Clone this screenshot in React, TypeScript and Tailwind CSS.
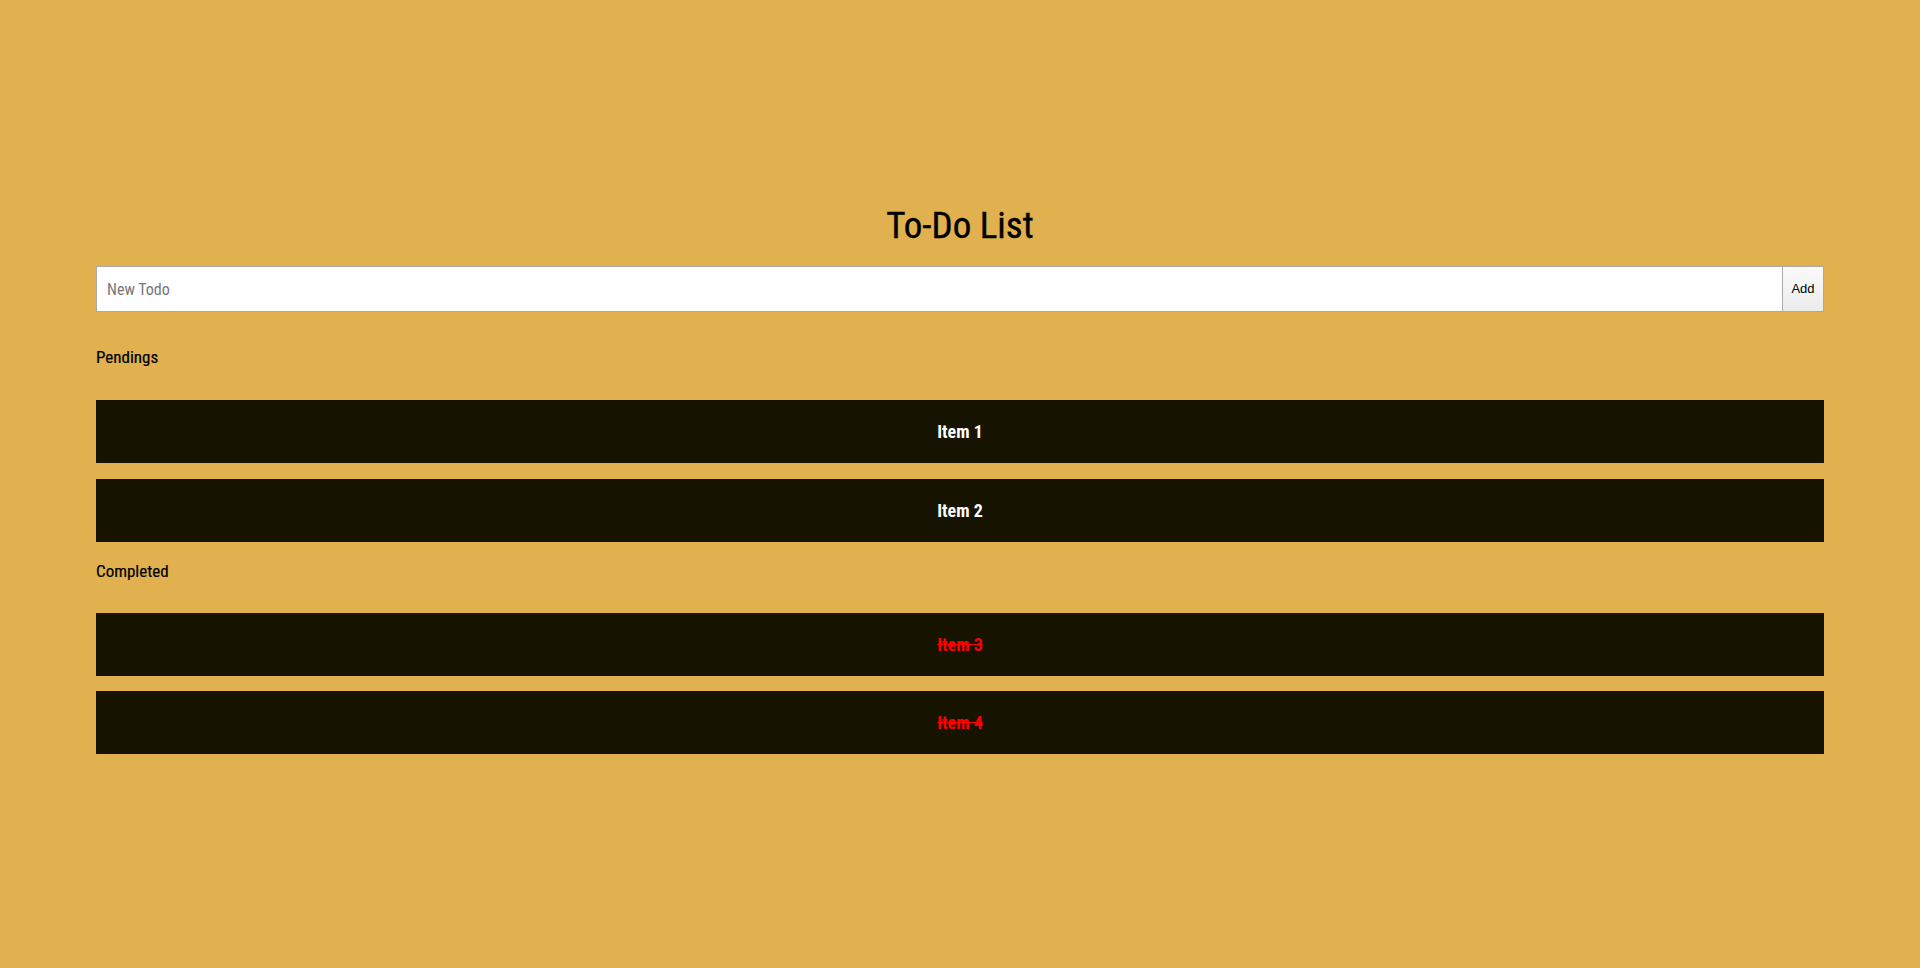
const PENDING = ["Item 1", "Item 2"];
const DONE = ["Item 3", "Item 4"];

function TodoRow({ label, done }: { label: string; done?: boolean }) {
  return (
    <li className="flex h-[63px] items-center justify-center bg-[#161400]">
      <span
        className={
          done
            ? "text-[18px] font-bold leading-none text-[#ff0000] line-through"
            : "text-[18px] font-bold leading-none text-white"
        }
      >
        {label}
      </span>
    </li>
  );
}

export default function App() {
  return (
    <div className="min-h-[968px] w-full bg-[#e1b04f] font-['Liberation_Sans_Narrow','Roboto_Condensed',Roboto,sans-serif] text-black">
      <div className="mx-auto w-[90%] pt-[207px]">
        <h1 className="text-center text-[37px] font-normal leading-none [-webkit-text-stroke:0.4px_black]">To-Do List</h1>

        {/* input row */}
        <form className="mt-[22px] flex h-[46px]" onSubmit={(e) => e.preventDefault()}>
          <input
            type="text"
            placeholder="New Todo"
            className="h-full flex-1 border border-[#a9a9a9] bg-white px-[10px] text-[16px] outline-none placeholder:text-[#777]"
          />
          <button
            type="submit"
            className="h-full w-[41px] border border-l-0 border-[#a9a9a9] bg-gradient-to-b from-[#fafafa] to-[#ececec] text-[13px] font-['Liberation_Sans',sans-serif] text-black"
          >
            Add
          </button>
        </form>

        <h3 className="mt-[37px] text-[17px] font-normal leading-none [-webkit-text-stroke:0.2px_black]">Pendings</h3>
        <ul className="mt-[34px] flex flex-col gap-[16px]">
          {PENDING.map((t) => (
            <TodoRow key={t} label={t} />
          ))}
        </ul>

        <h3 className="mt-[21px] text-[17px] font-normal leading-none [-webkit-text-stroke:0.2px_black]">Completed</h3>
        <ul className="mt-[33px] flex flex-col gap-[15px]">
          {DONE.map((t) => (
            <TodoRow key={t} label={t} done />
          ))}
        </ul>
      </div>
    </div>
  );
}
